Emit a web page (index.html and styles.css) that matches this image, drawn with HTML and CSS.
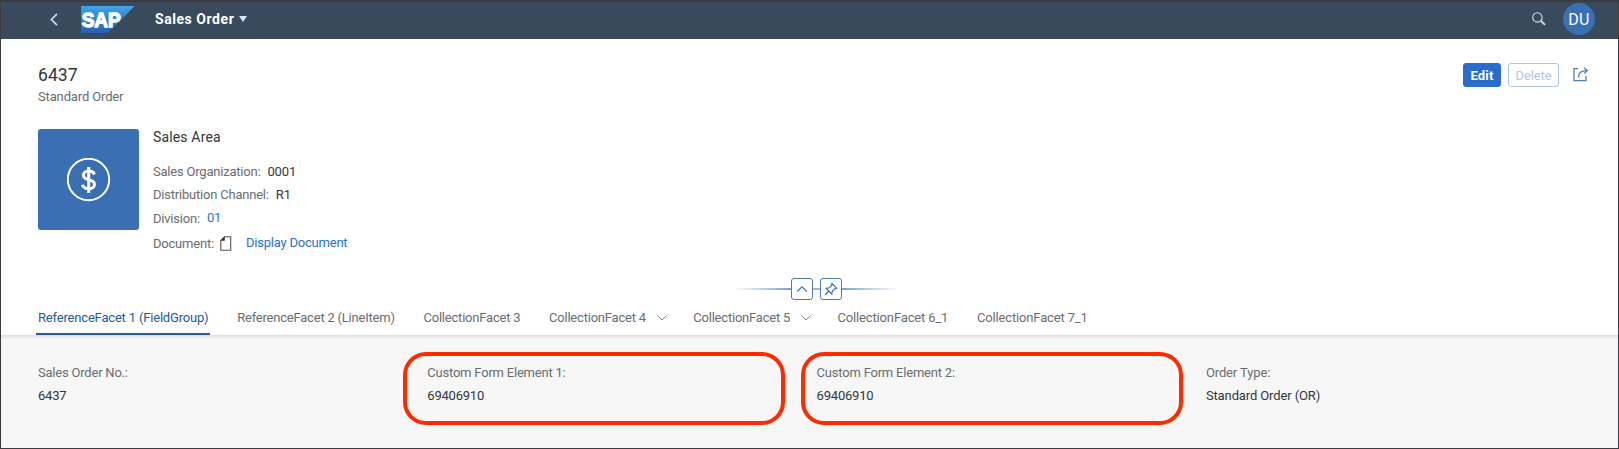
FILE: index.html
```html
<!DOCTYPE html>
<html lang="en">
<head>
<meta charset="utf-8">
<title>Sales Order</title>
<link rel="stylesheet" href="styles.css">
</head>
<body>
<div class="app">
  <header class="shell">
    <svg class="back" width="8" height="13" viewBox="0 0 8 13"><path d="M7 .8 1.4 6.5 7 12.2"/></svg>
    <svg class="logo" width="54" height="27" viewBox="0 0 54 27">
      <defs><linearGradient id="sap" x1="0" y1="0" x2="0" y2="1"><stop offset="0" stop-color="#3ea6e4"/><stop offset="1" stop-color="#2460b2"/></linearGradient></defs>
      <path d="M0 0H53.5L27 27H0Z" fill="url(#sap)"/>
      <text x="0.7" y="20.9" textLength="39" lengthAdjust="spacingAndGlyphs">SAP</text>
    </svg>
    <div class="shell-title">Sales Order</div>
    <svg class="caret" width="8" height="6" viewBox="0 0 8 6"><path d="M0 0H8L4 6Z"/></svg>
    <svg class="search" width="14" height="14" viewBox="0 0 14 14"><circle cx="5.4" cy="5.4" r="4.7"/><path d="M9 9 13 12.8"/></svg>
    <div class="avatar">DU</div>
  </header>

  <section class="head">
    <div class="title-row">
      <div class="titles">
        <h1>6437</h1>
        <p class="subtitle">Standard Order</p>
      </div>
      <div class="actions">
        <button class="btn primary">Edit</button>
        <button class="btn disabled">Delete</button>
        <svg class="share" width="16" height="15" viewBox="0 0 16 15"><path d="M5 1.6H1V13.6H13V9"/><path d="M5.5 10.5C5.5 6 8 3.6 13.8 3.6M11 .8 14.3 3.6 11.3 6.6"/></svg>
      </div>
    </div>
    <div class="info">
      <div class="tile">
        <svg width="44" height="44" viewBox="0 0 44 44"><circle cx="21.5" cy="21.5" r="20.7" fill="none" stroke="#fff" stroke-width="2"/><path d="M27.5 16.3C26.5 14 24.5 13 21.8 13 18.5 13 16.3 14.8 16.3 17.3 16.3 23.3 27.5 20.2 27.5 26.3 27.5 29 25 30.8 21.8 30.8 18.5 30.8 16.3 29.6 15.3 26.8M21.7 9V35" fill="none" stroke="#fff" stroke-width="3"/></svg>
      </div>
      <div class="area">
        <h2>Sales Area</h2>
        <div class="row"><span class="label">Sales Organization:</span><span class="value">0001</span></div>
        <div class="row"><span class="label">Distribution Channel:</span><span class="value">R1</span></div>
        <div class="row"><span class="label">Division:</span><a class="link">01</a></div>
        <div class="row doc"><span class="label">Document:</span><svg width="12" height="15" viewBox="0 0 12 15"><path d="M4.5.7H10.7V14.2H.8V4.5Z" fill="none" stroke="#515559" stroke-width="1.1"/><path d="M.5 4.8 4.8.3V4.8Z" fill="#32363a"/></svg><a class="link">Display Document</a></div>
      </div>
    </div>
    <div class="collapse">
      <i class="fade left"></i>
      <span class="tool"><svg width="20" height="20" viewBox="0 0 20 20"><path d="M5 12.6 10 7.8 15 12.6"/></svg></span>
      <i class="dash"></i>
      <span class="tool"><svg width="20" height="20" viewBox="0 0 20 20"><path d="M11 4.5 15.6 9.2 13.8 9.7 11.4 12 10.8 15 5.2 9.3 8.2 8.8 10.5 6.4ZM7.8 12 4 16"/></svg></span>
      <i class="fade right"></i>
    </div>
    <nav class="tabs">
      <a class="tab active">ReferenceFacet 1 (FieldGroup)</a>
      <a class="tab">ReferenceFacet 2 (LineItem)</a>
      <a class="tab">CollectionFacet 3</a>
      <a class="tab">CollectionFacet 4<svg width="10" height="6" viewBox="0 0 10 6"><path d="M.5.6 5 5 9.5.6"/></svg></a>
      <a class="tab">CollectionFacet 5<svg width="10" height="6" viewBox="0 0 10 6"><path d="M.5.6 5 5 9.5.6"/></svg></a>
      <a class="tab wide">CollectionFacet 6_1</a>
      <a class="tab wide">CollectionFacet 7_1</a>
    </nav>
  </section>

  <section class="form">
    <div class="field"><span class="label">Sales Order No.:</span><span class="value">6437</span></div>
    <div class="field marked"><span class="label">Custom Form Element 1:</span><span class="value">69406910</span></div>
    <div class="field marked second"><span class="label">Custom Form Element 2:</span><span class="value">69406910</span></div>
    <div class="field last"><span class="label">Order Type:</span><span class="value">Standard Order (OR)</span></div>
  </section>
</div>
</body>
</html>
```
FILE: styles.css
```css
*, *::before { box-sizing: border-box; }
body { margin: 0; font-family: Roboto, "Liberation Sans", sans-serif; font-size: 13px; letter-spacing: -.21px; color: #32363a; }
h1, h2, p { margin: 0; font-weight: 400; }
.app { width: 1619px; height: 449px; border: 1px solid #3c3c3e; border-top-width: 2px; background: #fff; display: flex; flex-direction: column; overflow: hidden; }

.shell { height: 37px; flex: none; background: #394a5c; display: flex; align-items: center; padding: 0 23px 3px 49px; }
.back { fill: none; stroke: #c3dbf5; stroke-width: 1.7; }
.logo { margin-left: 23px; }
.logo text { font: 700 20px "Liberation Sans", sans-serif; letter-spacing: 0; fill: #fff; stroke: #fff; stroke-width: 1.3; }
.shell-title { margin-left: 20px; color: #fff; font-weight: 700; font-size: 14px; line-height: 20px; letter-spacing: .55px; }
.caret { margin-left: 5px; fill: #d1e8ff; }
.search { margin-left: auto; fill: none; stroke: #d0dcea; stroke-width: 1.1; }
.search path { stroke-width: 1.8; }
.avatar { margin-left: 17px; width: 32px; height: 32px; border-radius: 50%; background: #3a6fb3; color: #fff; font-size: 16px; line-height: 33px; letter-spacing: .2px; text-align: center; }

.head { height: 296px; flex: none; padding: 0 29px 0 37px; display: flex; flex-direction: column; }
.title-row { display: flex; justify-content: space-between; height: 90px; padding-top: 24px; }
h1 { font-size: 17.5px; line-height: 25px; letter-spacing: .1px; }
.subtitle { color: #6a6d70; line-height: 18px; letter-spacing: -.14px; }
.actions { display: flex; align-items: center; height: 24px; }
.btn { height: 24px; font: 400 13px Roboto, sans-serif; letter-spacing: -.1px; border: 1px solid #2a6ccb; border-radius: 3px; padding: 0; }
.primary { width: 38px; background: #2a6ccb; color: #fff; font-weight: 700; letter-spacing: .2px; }
.disabled { width: 51px; margin-left: 7px; background: #fff; color: #b3c7e2; border-color: #b3c7e2; }
.share { margin: 0 0 1px 14px; fill: none; stroke: #4b7fc0; stroke-width: 1.3; }

.info { display: flex; gap: 14px; height: 149px; }
.tile { width: 101px; height: 101px; border-radius: 3px; background: #3a6fb3; display: flex; align-items: center; justify-content: center; }
h2 { font-size: 14px; line-height: 16px; margin-bottom: 15px; letter-spacing: .15px; }
.row { display: flex; align-items: center; height: 23.3px; }
.label { color: #6a6d70; white-space: nowrap; }
.row .value, .row .link { margin-left: 7px; }
.row .value { letter-spacing: -.1px; }
.link { color: #2a72d0; padding-bottom: 1px; }
.doc { height: 27px; }
.doc svg { margin-left: 6.5px; }
.row.doc .link { margin-left: 13.5px; }

.collapse { display: flex; align-items: center; height: 22px; padding-left: 697px; }
.tool { width: 22px; height: 22px; border: 1px solid #4a7ab8; border-radius: 3px; }
.tool svg { display: block; fill: none; stroke: #3a6fb3; stroke-width: 1.2; }
.dash { width: 7px; height: 2px; background: #9db7d9; }
.fade { width: 56px; height: 2px; }
.left { background: linear-gradient(to right, #fff, #7f9fca); }
.right { background: linear-gradient(to left, #fff, #7f9fca); }

.tabs { display: flex; gap: 28.7px; height: 35px; color: #6a6d70; }
.tab { display: flex; align-items: center; height: 35px; white-space: nowrap; }
.tab svg { margin: 0 -2.3px 0 11px; fill: none; stroke: #85888b; stroke-width: 1; }
.wide { letter-spacing: -.15px; }
.active { color: #2459a4; border-bottom: 2px solid #2459a4; padding: 2px 2px 0; margin: 0 -2px; letter-spacing: -.18px; }

.form { flex: 1; display: grid; grid-template-columns: 389.3px 389.3px 389.3px 1fr; background: #f7f7f7; padding: 26px 0 0 37px; box-shadow: inset 0 3px 3px -1px #ddd; }
.field { position: relative; display: flex; flex-direction: column; line-height: 23.4px; height: 50px; }
.last { letter-spacing: -.12px; }
.marked::before { content: ""; position: absolute; left: -24px; top: -9px; width: 382px; height: 73px; border: 4px solid #ff2a00; border-radius: 23px; }
.second::before { left: -16px; }
```
